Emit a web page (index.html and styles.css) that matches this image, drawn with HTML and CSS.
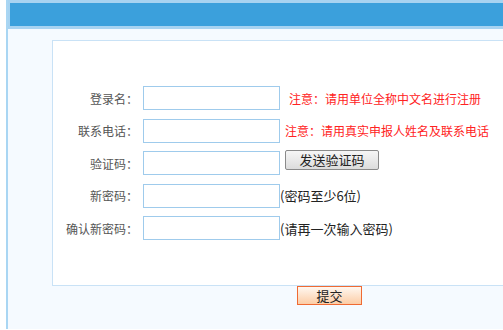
FILE: index.html
```html
<!DOCTYPE html>
<html lang="zh-CN">
<head>
    <meta charset="UTF-8">
    <meta name="viewport" content="width=device-width, initial-scale=1.0">
    <title>用户注册</title>
    <link rel="stylesheet" href="styles.css">
</head>
<body>

    <div class="frame">
        <div class="topbar"></div>

        <div class="panel">
            <form class="reg-form">
                <div class="row">
                    <label class="lbl" for="loginName">登录名：</label>
                    <input class="txt" type="text" id="loginName">
                    <span class="note note-first">注意：请用单位全称中文名进行注册</span>
                </div>
                <div class="row">
                    <label class="lbl" for="phone">联系电话：</label>
                    <input class="txt" type="text" id="phone">
                    <span class="note">注意：请用真实申报人姓名及联系电话</span>
                </div>
                <div class="row">
                    <label class="lbl" for="code">验证码：</label>
                    <input class="txt" type="text" id="code">
                    <button type="button" class="btn-code">发送验证码</button>
                </div>
                <div class="row">
                    <label class="lbl" for="pwd">新密码：</label>
                    <input class="txt" type="password" id="pwd">
                    <span class="hint">(密码至少6位)</span>
                </div>
                <div class="row">
                    <label class="lbl" for="pwd2">确认新密码：</label>
                    <input class="txt" type="password" id="pwd2">
                    <span class="hint">(请再一次输入密码)</span>
                </div>
            </form>
        </div>

        <div class="actions">
            <button type="button" class="btn-submit">提交</button>
        </div>
    </div>

</body>
</html>
```

FILE: styles.css
```css
body {
    margin: 0;
    padding: 0;
    background-color: #fff;
    font-family: "Noto Sans CJK SC", "Noto Sans", sans-serif;
    overflow: hidden;
}
.frame {
    margin-left: 6px;
    height: 329px;
    border-left: 2px solid #a9d6f3;
    background-color: #f5faff;
    overflow: hidden;
}
.topbar {
    height: 23px;
    border-top: 3px solid #a7d3f1;
    border-bottom: 3px solid #a7d3f1;
    border-left: 2px solid #a7d3f1;
    background-color: #3ba0dc;
}
.panel {
    box-sizing: border-box;
    width: 520px;
    height: 246px;
    margin: 11px 0 0 44px;
    padding-top: 45px;
    background-color: #fff;
    border: 1px solid #c9e2f6;
}
.reg-form {
    display: flex;
    flex-direction: column;
    gap: 8.5px;
}
.row {
    display: flex;
    align-items: center;
    height: 24px;
}
.lbl {
    box-sizing: border-box;
    width: 90px;
    padding-right: 5px;
    text-align: right;
    font-size: 12px;
    color: #555;
}
.txt {
    box-sizing: border-box;
    width: 137px;
    height: 24px;
    margin: 0;
    border: 1px solid #9fcbec;
    background-color: #fff;
}
.note {
    margin-left: 5px;
    font-size: 12px;
    color: #f22;
}
.note-first {
    margin-left: 9px;
}
.hint {
    font-size: 13px;
    color: #222;
}
.btn-code {
    align-self: flex-start;
    margin: -1px 0 0 5px;
    width: 94px;
    height: 20px;
    padding: 0;
    border: 1px solid #8a8a8a;
    border-radius: 2px;
    background: linear-gradient(#f6f6f6, #dcdcdc);
    font-family: inherit;
    font-size: 13px;
    color: #222;
    line-height: 18px;
}
.actions {
    padding-left: 289px;
}
.btn-submit {
    display: block;
    width: 65px;
    height: 19px;
    padding: 0;
    border: 1px solid #ef6a33;
    background: linear-gradient(#fff7f0, #fccda6);
    font-family: inherit;
    font-size: 13px;
    color: #222;
    line-height: 17px;
}
```
